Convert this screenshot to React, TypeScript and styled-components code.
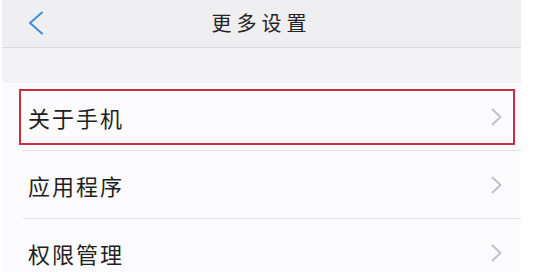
import styled, { createGlobalStyle } from 'styled-components';

const GlobalStyle = createGlobalStyle`
  html, body {
    margin: 0;
    padding: 0;
    background: #ffffff;
    font-family: "Noto Sans CJK SC", "Noto Sans", sans-serif;
  }
`;

const Screen = styled.div`
  width: 519px;
  height: 272px;
  margin-left: 2px;
  overflow: hidden;
  background: #fbfafc;
`;

const Header = styled.header`
  display: grid;
  grid-template-columns: 60px 1fr 60px;
  align-items: center;
  height: 47px;
  background: #efeff1;
  border-bottom: 1px solid #d8d8db;
`;

const BackButton = styled.button`
  display: flex;
  align-items: center;
  padding: 0 0 2px 25px;
  height: 47px;
  border: none;
  background: none;
  cursor: pointer;
`;

const Title = styled.h1`
  margin: 0 0 2px;
  text-align: center;
  font-size: 20px;
  font-weight: 400;
  letter-spacing: 5px;
  color: #232323;
  line-height: 1;
`;

const Spacer = styled.div`
  height: 35px;
  background: #f3f2f5;
`;

const List = styled.ul`
  list-style: none;
  margin: 0;
  padding: 0;
`;

const Item = styled.li`
  position: relative;
  display: flex;
  align-items: center;
  justify-content: space-between;
  height: 67px;
  margin-left: 21px;
  padding: 0 19px 0 5px;
  border-bottom: 1px solid #e3e3e6;
`;

const Label = styled.span`
  font-size: 22px;
  letter-spacing: 2px;
  color: #1f1f1f;
  line-height: 1;
`;

const Highlight = styled.div`
  position: absolute;
  left: -4px;
  right: 6px;
  top: 6px;
  bottom: 5px;
  border: 2px solid #c9303e;
  pointer-events: none;
`;

const BackIcon = () => (
  <svg width="17" height="24" viewBox="0 0 17 24">
    <polyline points="15,1.5 3,12 15,22.5" fill="none" stroke="#3a8fdc" strokeWidth="2" strokeLinecap="round" strokeLinejoin="round" />
  </svg>
);

const Chevron = () => (
  <svg width="11" height="18" viewBox="0 0 11 18">
    <polyline points="1.5,1.5 9.5,9 1.5,16.5" fill="none" stroke="#bfbfc3" strokeWidth="1.8" strokeLinecap="round" strokeLinejoin="round" />
  </svg>
);

const items = [
  { name: '关于手机', active: true },
  { name: '应用程序', active: false },
  { name: '权限管理', active: false },
];

export default function App() {
  return (
    <>
      <GlobalStyle />
      <Screen>
        <Header>
          <BackButton aria-label="返回">
            <BackIcon />
          </BackButton>
          <Title>更多设置</Title>
          <div />
        </Header>
        <Spacer />
        <List>
          {items.map((item) => (
            <Item key={item.name}>
              <Label>{item.name}</Label>
              <Chevron />
              {item.active && <Highlight />}
            </Item>
          ))}
        </List>
      </Screen>
    </>
  );
}
